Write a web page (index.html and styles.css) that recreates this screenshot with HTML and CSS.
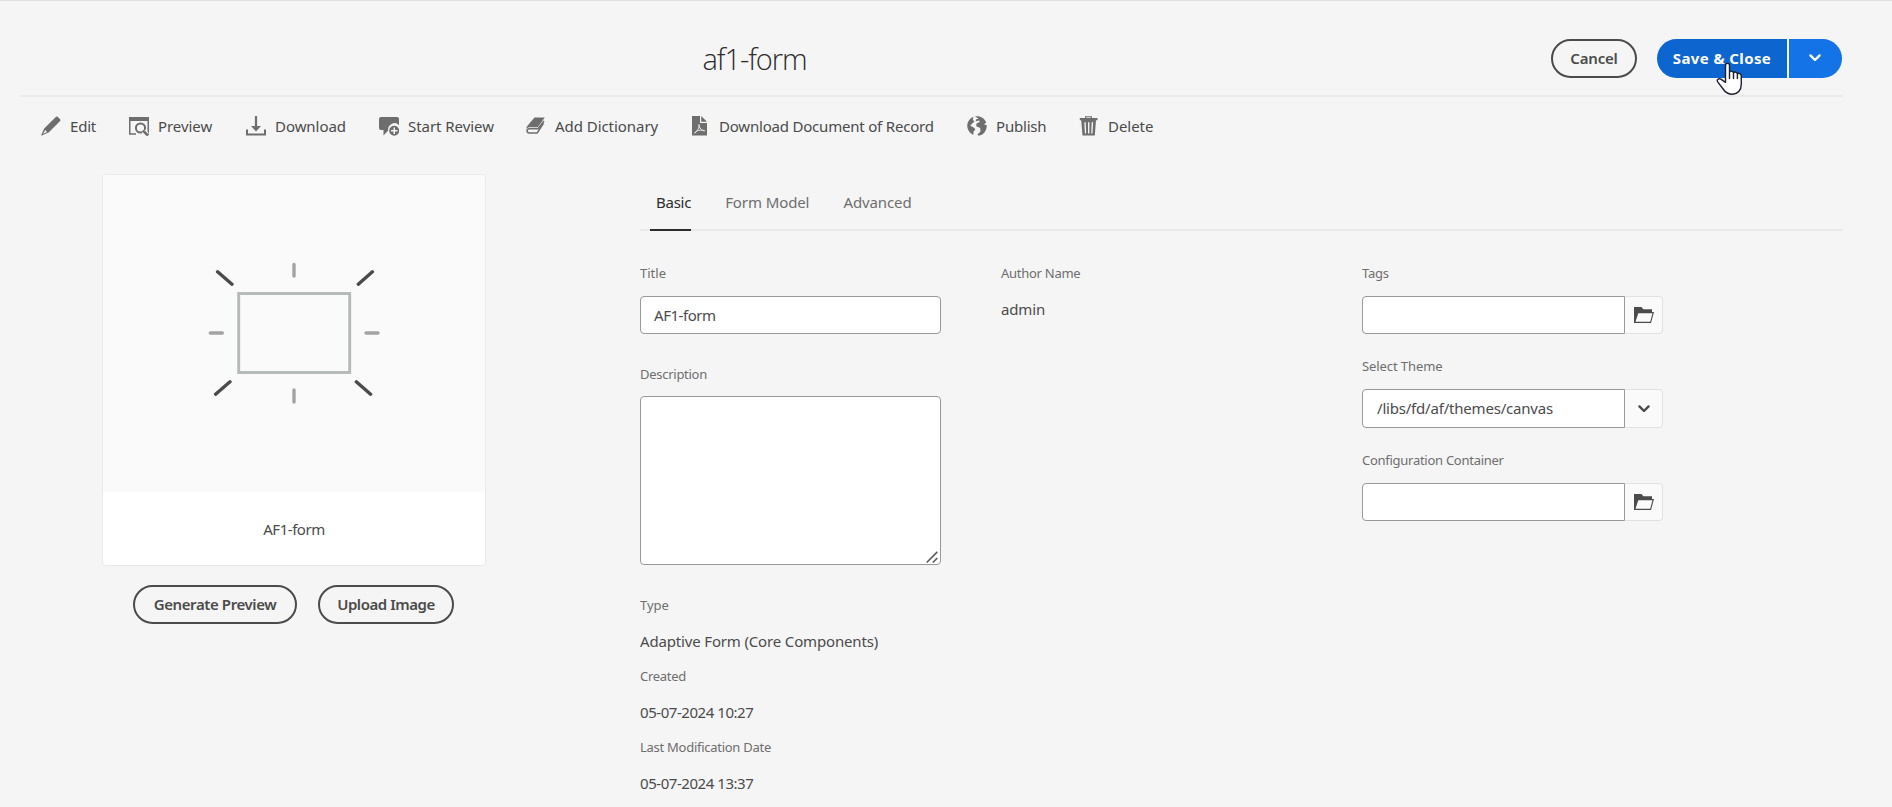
FILE: index.html
```
<!DOCTYPE html>
<html lang="en">
<head>
<meta charset="utf-8">
<title>af1-form</title>
<link rel="stylesheet" href="styles.css">
</head>
<body>
<header class="header">
  <h1 class="page-title">af1-form</h1>
  <div class="actions">
    <button class="btn btn-cancel">Cancel</button>
    <div class="split">
      <button class="btn-save">Save &amp; Close</button>
      <button class="btn-more" aria-label="More"><svg width="14" height="10" viewBox="0 0 14 10"><path d="M2.400 2.400 7 7l4.600-4.600" fill="none" stroke="#fff" stroke-width="2.400" stroke-linecap="round" stroke-linejoin="round"/></svg></button>
      <svg class="cursor" width="28" height="34" viewBox="0 0 28 34"><path d="M9.500 3.500C9.500.6 13.500.6 13.500 3.500V10.200C14.200 8.600 17.200 8.800 17.500 11 18.300 9.500 21 9.800 21.400 12 22.400 10.800 25.300 11.200 25.300 14V22C25.300 28.500 21.500 32.300 16.500 32.300 12 32.300 9.500 30.500 7.500 27.500L1.700 19.800C.4 17.700 2.700 15.900 4.800 17.100L9.500 20.300ZM13.500 10.200V16.500M17.500 11V16.500M21.400 12V16.500" fill="#fff" stroke="#1c1f2e" stroke-width="1.400" stroke-linejoin="round" stroke-linecap="round"/></svg>
    </div>
  </div>
</header>

<nav class="toolbar">
  <a class="tool"><svg class="ico" viewBox="0 0 20 20"><path d="M14.800.9Q15.700 0 16.600.8L19.100 3.300Q20 4.200 19.100 5.100L7.600 16.600.9 19.500Q0 19.700.2 18.900L3.200 12.500ZM4.300 14 2 18 6 15.900Z" fill-rule="evenodd"/></svg><span class="lbl tight">Edit</span></a>
  <a class="tool"><svg class="ico" viewBox="0 0 20 20"><path d="M0 1H20V19H18.500V5H1.500V17.200H7V18.700H0Z"/><circle cx="11.500" cy="12" r="4.600" fill="none" stroke="#6e6e6e" stroke-width="2"/><path d="M14.500 15.200 18 19" stroke="#f5f5f5" stroke-width="5"/><path d="M14.800 15.300 18 18.700" stroke="#6e6e6e" stroke-width="2.600" stroke-linecap="round"/></svg><span class="lbl">Preview</span></a>
  <a class="tool"><svg class="ico" viewBox="0 0 20 20"><path d="M8.900 0H11.100V10H15L10 15.500 5 10H8.900ZM0 13.500H2V17.500H18V13.500H20V19.500H0Z"/></svg><span class="lbl">Download</span></a>
  <a class="tool"><svg class="ico" viewBox="0 0 20 20"><path d="M2 1H18Q20 1 20 3V9.200A6.300 6.300 0 0 0 9.200 14.500L4.500 19.500V14H2Q0 14 0 12V3Q0 1 2 1Z"/><path d="M15.200 9.800a5 5 0 1 1 0 10 5 5 0 0 1 0-10ZM14.500 11.500V14.100H12V15.500H14.500V18.100H16V15.500H18.500V14.100H16V11.500Z" fill-rule="evenodd"/></svg><span class="lbl">Start Review</span></a>
  <a class="tool"><svg class="ico" viewBox="0 0 20 20"><path d="M8.500 1.500H18.800L11.700 11.300H3.500C1.800 11.300.9 12 .4 13 .2 11.800.6 11 1.300 10.100Z"/><path d="M17.600 7.200 11.200 17H3.400C.2 17 .3 12.700 3.200 12.700H12L18 5" fill="none" stroke="#6e6e6e" stroke-width="1.500"/></svg><span class="lbl">Add Dictionary</span></a>
  <a class="tool"><svg class="ico" viewBox="0 0 20 20"><path d="M2 0H10V7H17V19.500H2ZM11.200 0 17 5.800H11.200Z"/><path d="M9 8.500C9.600 11.500 7.500 15 4.500 17.200 6 14.500 11 13.200 14.700 14.800 11.500 15 9 11.700 9 8.500Z" fill="none" stroke="#f5f5f5" stroke-width=".9"/></svg><span class="lbl tight">Download Document of Record</span></a>
  <a class="tool"><svg class="ico" viewBox="0 0 20 20"><path d="M6.500.8 5.800 3.500 7.300 5.800 5.200 7.600 3.300 9.800 6.700 11.600 8.400 13.300 6.500 15.700 6.300 18.900C-1.200 15.500-2.300 5 6.500.8ZM8 .4C13 -.6 17.500 2 19.200 6.500L17 8.300 19.700 9.300C20 14.500 16.500 19 11.500 19.700L10.500 18.500 13.500 15.500 13.200 12 9.200 10.300 9.500 7.500 13 5.700 11.700 4.500 8.500 5.400 9.300 3.300 11.500 2.400Z"/></svg><span class="lbl tight">Publish</span></a>
  <a class="tool"><svg class="ico" viewBox="0 0 20 20"><path d="M6 .3H13V2H18.500V4.300H17L15.800 19.600H3.500L2.200 4.300H.8V2H6ZM7.300 1.300V2H11.700V1.300ZM5.300 6.300 5.900 17.500H7.200L6.700 6.300ZM9 6.300V17.500H10.400V6.300ZM12.700 6.300 12.200 17.500H13.500L14.100 6.300Z" fill-rule="evenodd"/></svg><span class="lbl">Delete</span></a>
</nav>

<main class="content">
  <aside class="side">
    <div class="card">
      <div class="card-art">
        <svg width="172" height="142" viewBox="208 262 172 142" fill="none" stroke-linecap="round"><rect x="238.700" y="293.500" width="111" height="79" stroke="#b5b9b8" stroke-width="2.900"/><path d="M294 264.500V276M294 390V402M210.300 333H222.300M366 333H378" stroke="#a3a3a3" stroke-width="3.400"/><path d="M217.600 271.800 232 284.200M372.400 271.800 358.300 284.200M230 381.800 215.600 394.200M356.300 381.800 370.600 394.200" stroke="#4b4b4b" stroke-width="3.400"/></svg>
      </div>
      <div class="card-name tighter">AF1-form</div>
    </div>
    <div class="side-actions">
      <button class="btn btn-generate">Generate Preview</button>
      <button class="btn btn-upload">Upload Image</button>
    </div>
  </aside>

  <section class="form">
    <div class="tabs">
      <a class="tab tab-active tight">Basic</a>
      <a class="tab">Form Model</a>
      <a class="tab">Advanced</a>
    </div>
    <div class="columns">
      <div class="col">
        <div class="label label-short">Title</div>
        <div class="input tighter">AF1-form</div>
        <div class="label label-desc">Description</div>
        <div class="textarea"><svg width="12" height="12" viewBox="0 0 12 12"><path d="M.7 11.500 11.300.9M6.800 11.500 11.300 7" stroke="#5c5c5c" stroke-width="1.600"/></svg></div>
        <dl class="meta">
          <dt class="label-short">Type</dt><dd>Adaptive Form (Core Components)</dd>
          <dt>Created</dt><dd class="tighter">05-07-2024 10:27</dd>
          <dt>Last Modification Date</dt><dd class="tighter">05-07-2024 13:37</dd>
        </dl>
      </div>
      <div class="col">
        <div class="label">Author Name</div>
        <div class="value">admin</div>
      </div>
      <div class="col">
        <div class="field">
          <div class="label">Tags</div>
          <div class="combo"><div class="combo-input"></div><button class="combo-btn" aria-label="Browse"><svg width="20" height="16" viewBox="0 0 20 16"><path d="M0 0H7.500L9.300 2.200H18V5H20L17 16H0Z" fill="#4b4b4b"/><path d="M4.300 6.300H18.500L16.200 14.700H1.500Z" fill="#fafafa"/></svg></button></div>
        </div>
        <div class="field">
          <div class="label label-theme">Select Theme</div>
          <div class="combo combo-theme"><div class="combo-input">/libs/fd/af/themes/canvas</div><button class="combo-btn" aria-label="Open"><svg width="14" height="10" viewBox="0 0 14 10"><path d="M2.400 2.400 7 7l4.600-4.600" fill="none" stroke="#4b4b4b" stroke-width="2.400" stroke-linecap="round" stroke-linejoin="round"/></svg></button></div>
        </div>
        <div class="field">
          <div class="label">Configuration Container</div>
          <div class="combo"><div class="combo-input"></div><button class="combo-btn" aria-label="Browse"><svg width="20" height="16" viewBox="0 0 20 16"><path d="M0 0H7.500L9.300 2.200H18V5H20L17 16H0Z" fill="#4b4b4b"/><path d="M4.300 6.300H18.500L16.200 14.700H1.500Z" fill="#fafafa"/></svg></button></div>
        </div>
      </div>
    </div>
  </section>
</main>
</body>
</html>
```
FILE: styles.css
```
* { box-sizing: border-box; }
body {
  margin: 0;
  height: 807px;
  overflow: hidden;
  background: #f5f5f5;
  border-top: 1px solid #e1e1e1;
  color: #4b4b4b;
  font: 15px/20px "Noto Sans", "Open Sans", sans-serif;
}
button { font: inherit; margin: 0; padding: 0; cursor: pointer; }
svg { display: block; flex: none; }
.tight { letter-spacing: -.2px; }
.tighter { letter-spacing: -.45px; }

.header {
  display: grid;
  grid-template-columns: 1469px 1fr;
  margin: 0 49px 0 20px;
  height: 96px;
  border-bottom: 2px solid #eaeaea;
}
.page-title {
  margin: 0;
  padding-top: 38px;
  text-align: center;
  color: #2c2c2c;
  font: 300 29px/40px "Open Sans", "Noto Sans", sans-serif;
  letter-spacing: -1.05px;
}
.actions { display: flex; justify-content: flex-end; gap: 20px; padding: 38px 1px 0 0; }
.btn {
  height: 39px;
  padding-bottom: 1px;
  border: 2px solid #4b4b4b;
  border-radius: 20px;
  background: transparent;
  color: #4b4b4b;
  font-weight: 600;
  letter-spacing: -.2px;
  white-space: nowrap;
}
.btn-cancel { width: 86px; }
.split { position: relative; display: flex; gap: 2px; }
.btn-save, .btn-more { height: 39px; border: 0; color: #fff; font-weight: 700; white-space: nowrap; }
.btn-save { width: 130px; padding-bottom: 2px; border-radius: 20px 0 0 20px; background: #0d66d0; letter-spacing: .38px; }
.btn-more { display: grid; place-items: center; width: 53px; padding: 0 2px 1px 0; border-radius: 0 20px 20px 0; background: #1473e6; }
.cursor { position: absolute; left: 59px; top: 23px; }

.toolbar {
  display: grid;
  grid-template-columns: 88px 117px 133px 147px 164px 277px 112px auto;
  align-items: center;
  height: 58px;
  padding-left: 41px;
}
.tool { display: flex; align-items: center; gap: 9px; white-space: nowrap; }
.lbl:not(.tight) { letter-spacing: -.05px; }
.ico { width: 20px; height: 20px; fill: #6e6e6e; }

.content { display: grid; grid-template-columns: 384px 1203px; column-gap: 154px; padding: 19px 0 0 102px; }
.card {
  height: 392px;
  overflow: hidden;
  border: 1px solid #eaeaea;
  border-radius: 4px;
  background: #fff;
}
.card-art { display: flex; justify-content: center; height: 317px; padding-top: 87px; background: #fafafa; }
.card-name { padding-top: 27px; text-align: center; }
.side-actions { display: flex; gap: 21px; padding: 19px 0 0 31px; }
.btn-generate { width: 164px; letter-spacing: -.4px; }
.btn-upload { width: 136px; letter-spacing: -.45px; }

.tabs { display: flex; height: 57px; padding-left: 10px; border-bottom: 2px solid #eaeaea; color: #6e6e6e; }
.tab { height: 57px; padding: 18px 0 0; margin-right: 34px; letter-spacing: -.1px; white-space: nowrap; }
.tab-active { padding-left: 6px; border-bottom: 2px solid #2c2c2c; color: #2c2c2c; letter-spacing: -.25px; }
.columns { display: grid; grid-template-columns: 301px 301px 301px; column-gap: 60px; padding-top: 32px; }
.label, .meta dt { height: 20px; color: #6e6e6e; font-size: 13px; letter-spacing: -.27px; white-space: nowrap; }
.label.label-short, .meta .label-short { letter-spacing: 0; }
.label.label-theme { letter-spacing: -.09px; }
.input {
  height: 38px;
  margin-top: 13px;
  padding: 8px 13px;
  border: 1px solid #999;
  border-radius: 4px;
  background: #fff;
}
.label-desc { margin-top: 30px; }
.textarea {
  display: flex;
  align-items: flex-end;
  justify-content: flex-end;
  height: 169px;
  margin-top: 12px;
  padding: 1px 2px;
  border: 1px solid #999;
  border-radius: 4px;
  background: #fff;
}
.meta { margin: 30px 0 0; }
.meta dd { height: 20px; margin: 16px 0 15px; white-space: nowrap; }
.meta dd:not(.tighter) { letter-spacing: -.16px; }
.value { margin-top: 16px; letter-spacing: -.16px; }
.combo { display: grid; grid-template-columns: 263px 38px; height: 38px; margin-top: 13px; }
.combo-theme { height: 39px; }
.combo-input { padding: 8px 14px; border: 1px solid #999; border-radius: 4px 0 0 4px; background: #fff; letter-spacing: -.2px; white-space: nowrap; }
.combo-btn { display: grid; place-items: center; border: 1px solid #e1e1e1; border-left: 0; border-radius: 0 4px 4px 0; background: #fafafa; }
.field + .field { margin-top: 22px; }
```
